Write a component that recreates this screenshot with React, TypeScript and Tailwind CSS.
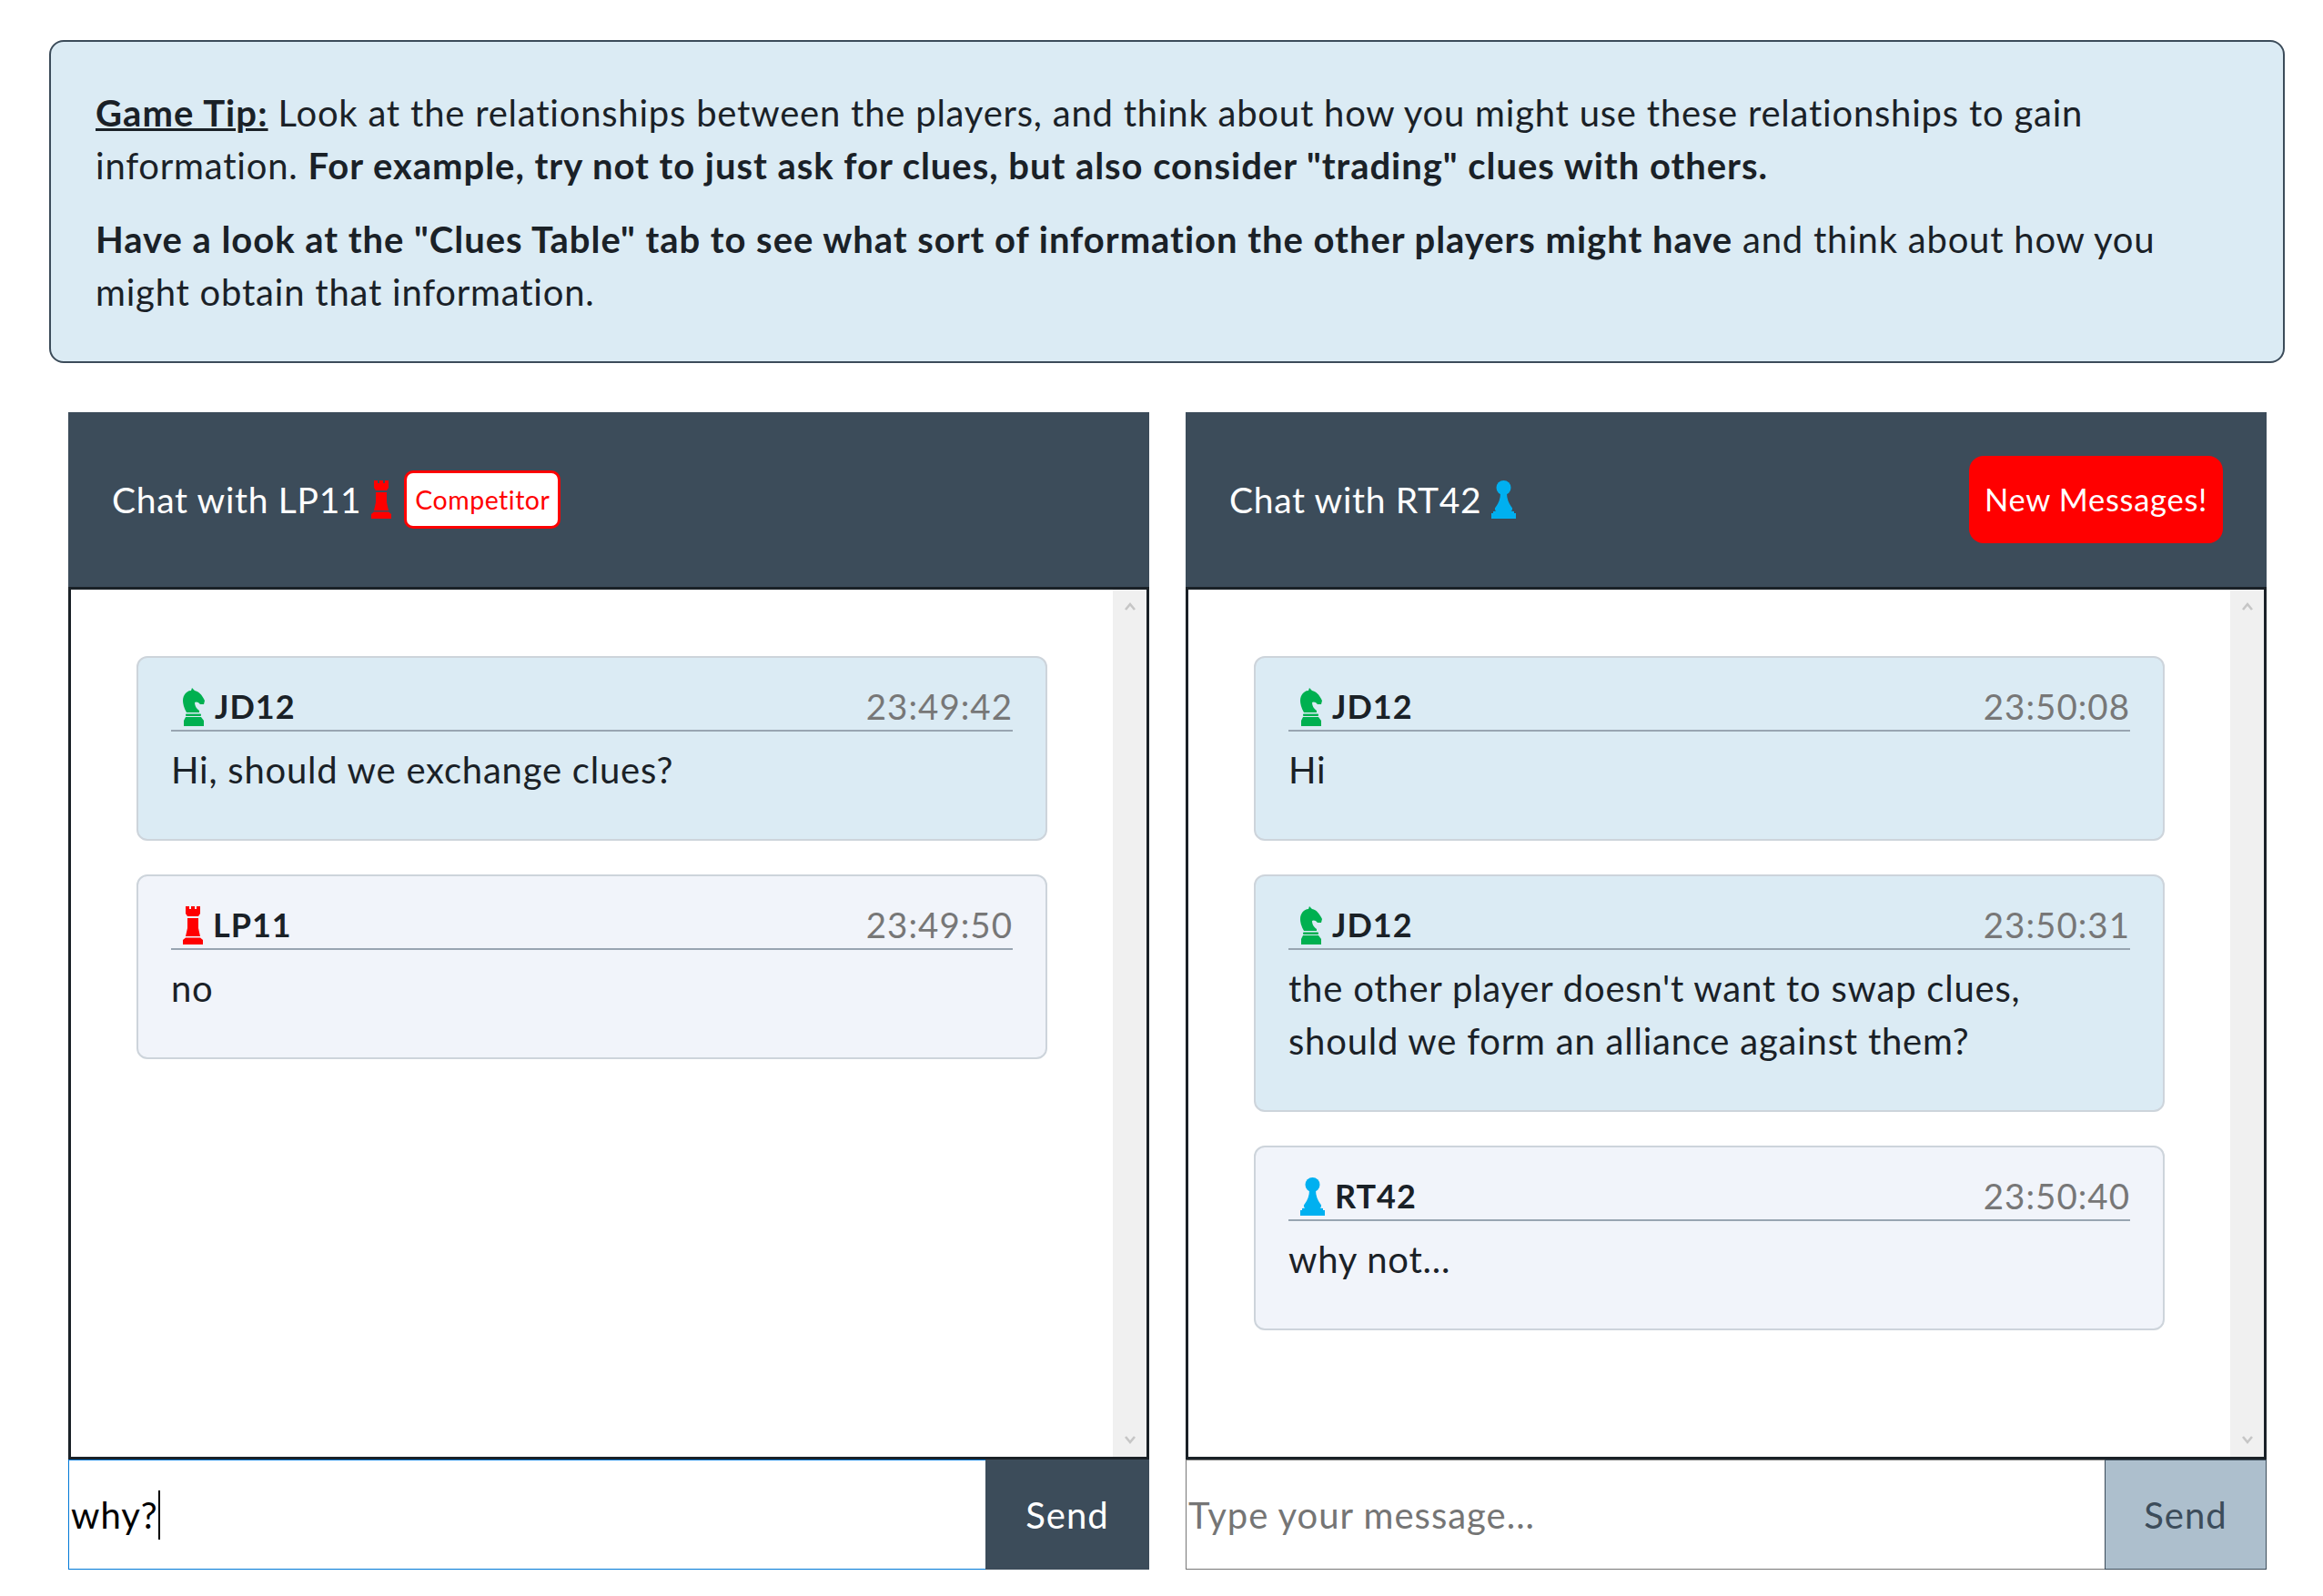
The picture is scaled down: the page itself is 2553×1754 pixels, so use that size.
const font = "font-['Lato','Liberation_Sans',sans-serif]";

function Knight({ className = "" }: { className?: string }) {
  return (
    <svg viewBox="0 0 24 42" className={`w-[24px] h-[42px] shrink-0 ${className}`} fill="#00b050">
      <path d="M10 0 L13 3 C18 4 21 8 24 14 L23 18 L19 18 C17 15 14 15 13 16 C13 20 15 23 18 25 L18 27 L4 27 C1 22 0 17 0 14 C0 8 4 3 9 3 Z" />
      <rect x="3" y="28.5" width="17" height="2.5" rx="1" />
      <path d="M3 32 H20 L23 36 V42 H1 V36 Z" />
    </svg>
  );
}
function Rook({ className = "" }: { className?: string }) {
  return (
    <svg viewBox="0 0 22 42" className={`w-[22px] h-[42px] shrink-0 ${className}`} fill="#ff0000">
      <path d="M3 0 H7 V3 H9 V0 H13 V3 H15 V0 H19 V8 L17 11 H5 L3 8 Z" />
      <path d="M5 13 H17 V24 L19 33 H3 L5 24 Z" />
      <path d="M3 34.5 H19 L22 37 V42 H0 V37 Z" />
    </svg>
  );
}
function Pawn({ className = "" }: { className?: string }) {
  return (
    <svg viewBox="0 0 27 42" className={`w-[27px] h-[42px] shrink-0 ${className}`} fill="#00b0f0">
      <circle cx="13.5" cy="8" r="8" />
      <path d="M10 14 H17 C17 20 19 25 22 29 C24 31 23 33 21.5 33.5 L25 34 V36 H27 V42 H0 V36 H2 V34 L5.5 33.5 C4 33 3 31 5 29 C8 25 10 20 10 14 Z" />
    </svg>
  );
}

function Msg({ icon, name, time, lines, mine, height }: { icon: React.ReactNode; name: string; time: string; lines: string[]; mine?: boolean; height: string }) {
  return (
    <div className={`${height} rounded-[12px] border-2 border-[#cdd4db] px-[36px] pt-[18px] ${mine ? "bg-[#dbebf4]" : "bg-[#f1f4fa]"}`}>
      <div className="flex items-end justify-between h-[63px] border-b-2 border-[#98a5b1] pb-[4px]">
        <div className="flex items-end gap-[11px] pl-[13px] font-bold text-[#1a2127] text-[36px] tracking-[1px]">
          {icon}
          <span className="leading-[44px]">{name}</span>
        </div>
        <span className="leading-[44px] text-[#777777] text-[38.5px] tracking-[1px]">{time}</span>
      </div>
      <div className="pt-[14px] text-[#1a2127]">
        {lines.map((l) => (
          <div key={l} className="leading-[57.6px]">{l}</div>
        ))}
      </div>
    </div>
  );
}

function Chevron({ up }: { up?: boolean }) {
  return (
    <svg viewBox="0 0 12 10" className="w-[12px] h-[10px]" fill="none" stroke="#c6c6c6" strokeWidth="2.6">
      <path d={up ? "M1 9 L6 3 L11 9" : "M1 1 L6 7 L11 1"} />
    </svg>
  );
}

function Panel({ title, right, children, input, sendBg }: { title: React.ReactNode; right?: React.ReactNode; children: React.ReactNode; input: React.ReactNode; sendBg: string }) {
  return (
    <div className="flex flex-col w-[1188px]">
      <div className="flex items-center justify-between h-[192px] bg-[#3c4c5a] px-[48px] text-white text-[39px] tracking-[0.7px]">
        {title}
        {right}
      </div>
      <div className="flex h-[959px] border-[3px] border-[#1a2127] bg-white">
        <div className="flex-1 flex flex-col gap-[37px] px-[72px] pt-[73px]">{children}</div>
        <div className="w-[37px] bg-[#f0f0f0] flex flex-col items-center justify-between py-[13px]">
          <Chevron up />
          <Chevron />
        </div>
      </div>
      <div className="flex h-[121px]">
        {input}
        <div className={`flex items-center justify-center tracking-[1px] ${sendBg}`}>Send</div>
      </div>
    </div>
  );
}

export default function App() {
  return (
    <div className={`${font} w-[2553px] h-[1754px] bg-white text-[40px] tracking-[0.78px] text-[#1a2127] pt-[44px]`}>
      <div className="ml-[54px] w-[2457px] h-[355px] rounded-[16px] border-2 border-[#3c4c5a] bg-[#dbebf4] px-[49px] pt-[50px] leading-[57.6px]">
        <p className="mb-[24px]">
          <b className="underline decoration-[3px] tracking-[1.1px]">Game Tip:</b> Look at the relationships between the players, and think about how you might use these relationships to gain
          <br />
          information. <b className="tracking-[0.96px]">For example, try not to just ask for clues, but also consider "trading" clues with others.</b>
        </p>
        <p>
          <b className="tracking-[0.96px]">Have a look at the "Clues Table" tab to see what sort of information the other players might have</b> and think about how you
          <br />
          might obtain that information.
        </p>
      </div>

      <div className="flex gap-[40px] ml-[75px] mt-[54px]">
        <Panel
          title={
            <div className="flex items-center">
              <span>Chat with LP11</span>
              <Rook className="ml-[11px]" />
              <span className="ml-[14px] flex items-center h-[64px] px-[9px] rounded-[10px] border-[3px] border-[#ff0000] bg-white text-[#ff0000] text-[28.5px] tracking-[0.5px]">Competitor</span>
            </div>
          }
          sendBg="w-[180px] bg-[#3c4c5a] text-white"
          input={
            <div className="flex-1 flex items-center border border-[#0078d7] pl-[2px] text-black border-r-0 tracking-[1px]">
              <span>why?</span>
              <span className="w-[2px] h-[54px] bg-black" />
            </div>
          }
        >
          <Msg height="h-[203px]" mine icon={<Knight />} name="JD12" time="23:49:42" lines={["Hi, should we exchange clues?"]} />
          <Msg height="h-[203px]" icon={<Rook />} name="LP11" time="23:49:50" lines={["no"]} />
        </Panel>
        <Panel
          title={
            <div className="flex items-center">
              <span>Chat with RT42</span>
              <Pawn className="ml-[11px]" />
            </div>
          }
          right={<span className="flex items-center h-[96px] px-[17px] rounded-[16px] bg-[#ff0000] text-white text-[34.5px] tracking-[0.7px]">New Messages!</span>}
          sendBg="w-[178px] bg-[#adbfcd] text-[#3c4c5a] border border-[#3c4c5a]"
          input={
            <input
              readOnly
              placeholder="Type your message..."
              className="flex-1 min-w-0 border border-[#767676] border-r-0 pl-[2px] outline-none tracking-[1px] placeholder:text-[#757575]"
            />
          }
        >
          <Msg height="h-[203px]" mine icon={<Knight />} name="JD12" time="23:50:08" lines={["Hi"]} />
          <Msg height="h-[261px]" mine icon={<Knight />} name="JD12" time="23:50:31" lines={["the other player doesn't want to swap clues,", "should we form an alliance against them?"]} />
          <Msg height="h-[203px]" icon={<Pawn />} name="RT42" time="23:50:40" lines={["why not..."]} />
        </Panel>
      </div>
    </div>
  );
}
